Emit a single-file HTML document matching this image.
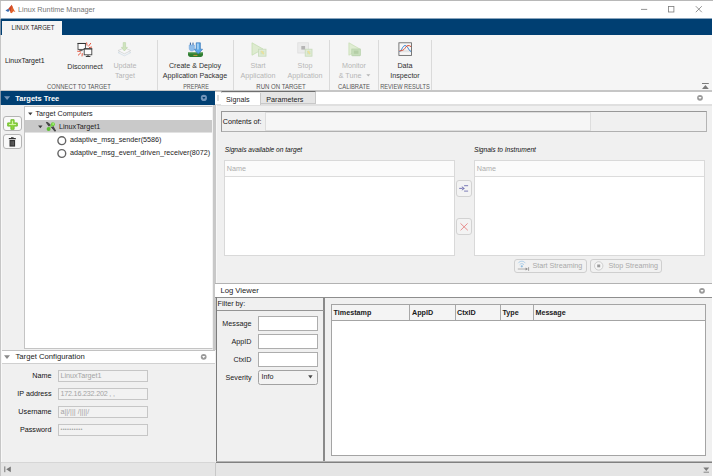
<!DOCTYPE html>
<html>
<head>
<meta charset="utf-8">
<title>Linux Runtime Manager</title>
<style>
html,body{margin:0;padding:0;}
body{width:713px;height:476px;overflow:hidden;background:#f0f0f0;font-family:"Liberation Sans",sans-serif;font-size:7.2px;color:#1c1c1c;position:relative;}
.a{position:absolute;white-space:nowrap;}
svg{position:absolute;overflow:visible;}
#titlebar{left:0;top:0;width:713px;height:19px;background:#fff;border-top:1px solid #b8b8b8;box-sizing:border-box;}
#title{left:18px;top:4.6px;font-size:7.8px;color:#767676;line-height:10px;transform:scaleX(0.93);transform-origin:0 0;}
#band{left:1px;top:19px;width:711px;height:16px;background:#003f72;}
#tab{left:2px;top:21px;width:60px;height:15px;background:#f5f5f5;}
#tabt{left:32.5px;top:22.5px;font-size:7px;color:#222;line-height:10px;transform:translateX(-50%) scaleX(0.85);}
#strip{left:1px;top:35px;width:711px;height:55px;background:#f5f5f5;}
#stripline{left:1px;top:90px;width:711px;height:2px;background:#c6c6c6;}
.tl{font-size:7.8px;line-height:9.5px;text-align:center;color:#303030;transform:translateX(-50%) scaleX(0.92);}
.dis{color:#b6b6b6;}
.sec{font-size:7px;color:#555;line-height:8px;text-align:center;transform:translateX(-50%) scaleX(0.83);top:83.3px;}
.vsep{width:1px;background:#dadada;top:40px;height:50px;}
#lhead{left:1px;top:91px;width:214px;height:13.5px;background:#003f72;}
#lheadt{left:15.2px;top:93.5px;font-weight:bold;color:#fff;font-size:7.5px;line-height:10px;}
#tree{left:24px;top:106px;width:189px;height:243px;background:#fff;border:1px solid #c4c4c4;border-right-color:#f2f2f2;box-sizing:border-box;}
.row{line-height:13.33px;height:13.33px;}
.btn{border:1px solid #b4b4b4;border-radius:3px;background:#f9f9f9;box-sizing:border-box;}
#chead{left:1px;top:350px;width:214px;height:14px;background:#fff;border-top:1px solid #c2c2c2;border-bottom:1px solid #d0d0d0;box-sizing:border-box;}
.h2{font-size:7.7px;line-height:10px;color:#222;}
.lbl{width:51.5px;left:0;text-align:right;line-height:12px;color:#111;}
.inp{left:57.5px;width:90.5px;height:12.2px;border:1px solid #c6c6c6;box-sizing:border-box;background:#f2f2f2;color:#a4a4a4;line-height:9.6px;padding-left:1.9px;}
#lbot{left:0;top:462px;width:713px;height:14px;background:#e5e5e5;}
.it{font-style:italic;font-size:6.6px;line-height:9px;color:#111;}
.tbl{background:#fff;border:1px solid #d9d9d9;box-sizing:border-box;}
.tblh{left:0;top:0;right:0;height:15px;background:#fbfbfb;border-bottom:1px solid #dcdcdc;color:#adadad;line-height:15px;padding-left:1.8px;}
.sbtn{border:1px solid #d2d2d2;border-radius:3px;background:#f3f3f3;box-sizing:border-box;}
.fin{left:258px;width:60px;height:14.5px;background:#fff;border:1px solid #adadad;box-sizing:border-box;}
.flbl{left:216px;width:35.5px;text-align:right;line-height:12px;color:#1a1a1a;}
.th{font-weight:bold;color:#1a1a1a;line-height:12px;top:306.5px;}
.cd{top:305px;width:1px;height:15px;background:#a8a8a8;}
</style>
</head>
<body>
<!-- window chrome -->
<div class="a" id="titlebar"></div>
<svg style="left:5px;top:3.8px" width="11" height="11" viewBox="0 0 12 12"><path d="M0.5 7.2 L3.6 5.2 L5.2 6.8 L3.4 8.6 Z" fill="#3d6fb0"/><path d="M3.6 5.2 L7.3 0.8 L8.4 4.2 L5.6 9.2 L5.2 6.8 Z" fill="#c8452a"/><path d="M7.3 0.8 C8.3 2.5 9.5 6.5 11.4 8.8 L9 8 L7.4 10.2 L5.6 9.2 C6.8 7 7.3 4 7.3 0.8Z" fill="#e2622a"/></svg>
<div class="a" id="title">Linux Runtime Manager</div>
<svg style="left:640px;top:5px" width="66" height="9" viewBox="0 0 66 9"><g stroke="#7a7a7a" stroke-width="0.8" fill="none"><path d="M1 4.4H7.2"/><rect x="28.4" y="1.5" width="5.5" height="5.5"/><path d="M55.8 1.2L61.8 7.2M61.8 1.2L55.8 7.2"/></g></svg>
<div class="a" id="band"></div>
<div class="a" id="tab"></div><div class="a" id="tabt">LINUX TARGET</div>
<div class="a" id="strip"></div>
<div class="a" id="stripline"></div>

<!-- toolstrip content -->
<div class="a" style="left:4.6px;top:55.5px;font-size:7.8px;line-height:10px;color:#222;transform:scaleX(0.885);transform-origin:0 0;">LinuxTarget1</div>
<div class="a tl" style="left:84.5px;top:62px;">Disconnect</div>
<div class="a tl dis" style="left:124.7px;top:61px;">Update<br>Target</div>
<div class="a sec" style="left:78.7px;transform:translateX(-50%) scaleX(0.845);">CONNECT TO TARGET</div>
<div class="a vsep" style="left:157px;"></div>
<div class="a tl" style="left:195.1px;top:61px;transform:translateX(-50%) scaleX(0.91);">Create &amp; Deploy<br>Application Package</div>
<div class="a sec" style="left:195.6px;transform:translateX(-50%) scaleX(0.777);">PREPARE</div>
<div class="a vsep" style="left:233px;"></div>
<div class="a tl dis" style="left:258.2px;top:61px;">Start<br>Application</div>
<div class="a tl dis" style="left:304.7px;top:61px;">Stop<br>Application</div>
<div class="a sec" style="left:281.4px;transform:translateX(-50%) scaleX(0.862);">RUN ON TARGET</div>
<div class="a vsep" style="left:329px;"></div>
<div class="a tl dis" style="left:353.8px;top:61px;">Monitor<br>&amp; Tune &nbsp;&nbsp;&nbsp;</div>
<svg style="left:366px;top:74px" width="5" height="3" viewBox="0 0 5 3"><path d="M0.3 0.3H4.3L2.3 2.6Z" fill="#b6b6b6"/></svg>
<div class="a sec" style="left:354.2px;transform:translateX(-50%) scaleX(0.829);">CALIBRATE</div>
<div class="a vsep" style="left:378px;"></div>
<div class="a tl" style="left:405.4px;top:61px;">Data<br>Inspector</div>
<div class="a sec" style="left:405px;transform:translateX(-50%) scaleX(0.81);">REVIEW RESULTS</div>
<div class="a vsep" style="left:431px;"></div>
<svg style="left:701px;top:82px" width="9" height="8" viewBox="0 0 9 8"><path d="M1 1.5H7.8" stroke="#7a7a7a" stroke-width="1"/><path d="M4.4 3L7.8 7H1Z" fill="#7a7a7a"/></svg>

<!-- ICONS placeholder -->
<!--ICONS-->
<!-- disconnect -->
<svg style="left:76px;top:42px" width="17" height="16" viewBox="0 0 17 16">
<rect x="2" y="1.4" width="7.4" height="6" fill="#fcfcfc" stroke="#444" stroke-width="0.9"/>
<path d="M1.6 1.5H9.8" stroke="#333" stroke-width="1"/>
<path d="M3.4 8.6H6.6" stroke="#444" stroke-width="0.9"/>
<rect x="8.2" y="6.8" width="7.6" height="6" fill="#fcfcfc" stroke="#444" stroke-width="0.9"/>
<path d="M7.8 6.9H16.2" stroke="#333" stroke-width="1"/>
<path d="M12 13V14M9.8 14.5H14.4" stroke="#3c3c3c" stroke-width="1"/>
<g stroke="#e2452a" stroke-width="0.9"><path d="M10.6 0.4L11.1 3.6M14.9 1L12.4 4.4M16 5L13 5.6"/><path d="M1.2 9.2L4.6 9.4M2 13.4L5 10.6M6 14.4L6.3 11.2"/></g>
</svg>
<!-- update target (disabled) -->
<svg style="left:117px;top:41.5px" width="15" height="15" viewBox="0 0 15 15" opacity="0.6">
<path d="M1 10.6L7.4 7.8L13.8 10.6L7.4 13.8Z" fill="#f2f7fb" stroke="#b4c8d8" stroke-width="0.7"/>
<path d="M1 8.6L7.4 5.8L13.8 8.6L7.4 11.8Z" fill="#fbfbfb" stroke="#b8b8b8" stroke-width="0.7"/>
<path d="M6.2 0.6H8.6V5.4H10.4L7.4 9L4.4 5.4H6.2Z" fill="#b7d99a" stroke="#94bf74" stroke-width="0.6"/>
</svg>
<!-- create & deploy -->
<svg style="left:187px;top:41.5px" width="17" height="16" viewBox="0 0 17 16">
<path d="M1 10.6H16V12.6C16 14.2 15 15 13.6 15H3.4C2 15 1 14.2 1 12.6Z" fill="#2f7d32"/>
<path d="M1 10.6H16V11.6H1Z" fill="#4d9a4a"/>
<path d="M6.4 13.4H10.4" stroke="#d89a3a" stroke-width="0.9"/>
<path d="M9.2 0.8H13.4V7.2H15.6L11.3 12L7 7.2H9.2Z" fill="#5aa7e6" stroke="#2f6fb6" stroke-width="0.6"/>
<path d="M10.3 1.4H11.6V7.6H10.3Z" fill="#bfe0fa"/>
<path d="M3.4 0.6V3M6 0.6V3" stroke="#2c5a9a" stroke-width="1"/>
<path d="M2.2 3H7.4V6.2C7.4 8 6.4 9 4.8 9C3.2 9 2.2 8 2.2 6.2Z" fill="#8fbdea" stroke="#6b9fd6" stroke-width="0.5"/>
</svg>
<!-- start app (disabled) -->
<svg style="left:250.5px;top:41.5px" width="16" height="15" viewBox="0 0 16 15" opacity="0.6">
<path d="M1 0.8L12 7L1 13.2Z" fill="#cfe6b8" stroke="#a6cf86" stroke-width="0.8" stroke-linejoin="round"/>
<rect x="7.4" y="7.2" width="7.6" height="7" fill="#d3e6c2" stroke="#a9c994" stroke-width="0.8"/>
<rect x="9.4" y="9" width="3.8" height="3.4" fill="#b7d7a3"/>
<path d="M10.4 9L12.8 12" stroke="#ecd25a" stroke-width="1.3"/>
</svg>
<svg style="left:297px;top:41.5px" width="16" height="15" viewBox="0 0 16 15" opacity="0.6">
<rect x="0.8" y="0.8" width="10.6" height="10.2" fill="#e6e6e6" stroke="#cfcfcf" stroke-width="0.8"/>
<rect x="4.3" y="4" width="3.8" height="3.6" fill="#8a8a8a"/>
<rect x="8.2" y="7.2" width="6.8" height="7" fill="#d3e6c2" stroke="#a9c994" stroke-width="0.8"/>
<rect x="10" y="9" width="3.4" height="3.4" fill="#b7d7a3"/>
<path d="M10.8 9L13 12" stroke="#ecd25a" stroke-width="1.3"/>
</svg>
<!-- monitor & tune (disabled) -->
<svg style="left:347.5px;top:41.5px" width="14" height="15" viewBox="0 0 14 15" opacity="0.6">
<path d="M0.9 0.8L11.8 7L0.9 13.2Z" fill="#d2e8bd" stroke="#aed28f" stroke-width="0.8" stroke-linejoin="round"/>
<rect x="3.8" y="7" width="8.6" height="6.6" fill="#a9cf95" stroke="#8fba7a" stroke-width="0.7"/>
<rect x="5.8" y="8.6" width="4.6" height="3.2" fill="#8ab573"/>
<path d="M5 14.4V13.6M7 14.4V13.6M9 14.4V13.6M11 14.4V13.6" stroke="#8fba7a" stroke-width="0.8"/>
</svg>
<!-- data inspector -->
<svg style="left:398px;top:42px" width="15" height="15" viewBox="0 0 15 15">
<rect x="0.9" y="0.8" width="12.6" height="12.6" fill="#f7f7f7" stroke="#626262" stroke-width="0.85"/>
<path d="M1.4 9H13" stroke="#e4e4e4" stroke-width="2.6"/>
<path d="M1.4 9.6C3.6 9.6 4.4 3.6 7 3.6C9.6 3.6 10.6 8.4 13 9.6" fill="none" stroke="#2f7fd0" stroke-width="1"/>
<path d="M1.4 8.8C3.4 8.8 5.6 8.6 7.6 5.4C9 3.2 11 3 13 4.6" fill="none" stroke="#d8452a" stroke-width="1"/>
</svg>
<!--/ICONS-->

<!-- left panel -->
<div class="a" id="lhead"></div>
<div class="a" id="lheadt">Targets Tree</div>
<svg style="left:3.5px;top:95.8px" width="7" height="5" viewBox="0 0 7 5"><path d="M0 0.3H6.2L3.1 3.9Z" fill="#7495b8"/></svg>
<svg style="left:200px;top:94px" width="8" height="8" viewBox="0 0 8 8"><circle cx="3.9" cy="3.9" r="3.1" fill="#7194ba"/><path d="M2.3 3H5.5L3.9 5.2Z" fill="#003f72"/></svg>
<div class="a" id="tree"></div>
<div class="a" style="left:25px;top:120px;width:187px;height:12px;background:#c9c9c9;"></div><div class="a" style="left:25px;top:132px;width:187px;height:1px;background:#e2e2e2;"></div>
<svg style="left:28px;top:111.6px" width="5" height="4" viewBox="0 0 5 4"><path d="M0.1 0.4H4.5L2.3 3.2Z" fill="#3c3c3c"/></svg>
<div class="a row" style="left:35.5px;top:106.7px;">Target Computers</div>
<svg style="left:38.4px;top:125px" width="5" height="4" viewBox="0 0 5 4"><path d="M0.1 0.4H4.5L2.3 3.2Z" fill="#3c3c3c"/></svg>
<div class="a row" style="left:59px;top:120px;">LinuxTarget1</div>
<div class="a row" style="left:70px;top:133.4px;">adaptive_msg_sender(5586)</div>
<div class="a row" style="left:70px;top:146.4px;">adaptive_msg_event_driven_receiver(8072)</div>
<svg style="left:57px;top:135.5px" width="10" height="23" viewBox="0 0 10 23"><circle cx="4.8" cy="4.7" r="3.9" fill="#fff" stroke="#646464" stroke-width="1.4"/><circle cx="4.8" cy="17.5" r="3.9" fill="#fff" stroke="#646464" stroke-width="1.4"/></svg>
<svg style="left:45px;top:121px" width="12" height="12" viewBox="0 0 12 12"><path d="M1.2 1.2L10.6 10.2" stroke="#505050" stroke-width="1.1"/><path d="M1 1.6L2.6 1L5.6 3.6L3.6 5.4Z" fill="#484848"/><path d="M6.4 6.2L8.4 5L11 9.8L9.6 10.6Z" fill="#484848"/><path d="M3.6 7.9L7.9 3.3" stroke="#8ee060" stroke-width="1.3"/><circle cx="7.9" cy="3.3" r="2" fill="#6ed03c"/><circle cx="8.2" cy="3" r="0.9" fill="#a6f07c"/><circle cx="3.6" cy="7.9" r="2" fill="#5cc030"/></svg>
<div class="a btn" style="left:2.5px;top:116.3px;width:19.5px;height:14.4px;"></div>
<div class="a btn" style="left:2.5px;top:134.3px;width:19.5px;height:14.4px;"></div>
<svg style="left:7px;top:118.5px" width="11" height="11" viewBox="0 0 11 11"><path d="M3.9 0.7H7.1V3.9H10.3V7.1H7.1V10.3H3.9V7.1H0.7V3.9H3.9Z" fill="#8fd640" stroke="#6dbb2c" stroke-width="0.9" stroke-linejoin="round"/><path d="M5.5 1.8V5.5M2 5.5H9" stroke="#d4f3a8" stroke-width="1.2"/></svg>
<svg style="left:8px;top:137px" width="9" height="10" viewBox="0 0 9 10"><path d="M0.8 1.6H7.8M3 0.7H5.6" stroke="#333" stroke-width="1.1"/><path d="M1.5 3H7.1V9.6H1.5Z" fill="#333"/><path d="M3.1 4.2V8.4M4.3 4.2V8.4M5.5 4.2V8.4" stroke="#888" stroke-width="0.5"/></svg>

<div class="a" id="chead"></div>
<svg style="left:4px;top:354.6px" width="7" height="5" viewBox="0 0 7 5"><path d="M0 0.2H6L3 3.9Z" fill="#8a8a8a"/></svg>
<div class="a h2" style="left:15.5px;top:351.8px;">Target Configuration</div>
<svg style="left:200px;top:352.5px" width="8" height="8" viewBox="0 0 8 8"><circle cx="3.7" cy="3.8" r="2.9" fill="#9a9a9a"/><path d="M2.1 2.9H5.3L3.7 5.3Z" fill="#fff"/></svg>
<div class="a lbl" style="top:369.6px;">Name</div>
<div class="a inp" style="top:369.5px;">LinuxTarget1</div>
<div class="a lbl" style="top:387.6px;">IP address</div>
<div class="a inp" style="top:387.6px;letter-spacing:-0.2px;">172.16.232.202 , ,</div>
<div class="a lbl" style="top:405.6px;">Username</div>
<div class="a inp" style="top:405.6px;">a||/||| /||||/</div>
<div class="a lbl" style="top:423.6px;">Password</div>
<div class="a inp" style="top:423.6px;font-size:5.4px;letter-spacing:0.35px;">••••••••••</div>

<div class="a" id="lbot"></div>
<div class="a" style="left:0;top:462px;width:215px;height:1px;background:#d6d6d6;"></div>
<svg style="left:3.5px;top:466px" width="8" height="7" viewBox="0 0 8 7"><path d="M0.8 0.4V6.2" stroke="#777" stroke-width="1"/><path d="M6.8 0.4V6.2L2.2 3.3Z" fill="#777"/></svg>

<!--RIGHT-->
<!-- right top: tab bar -->
<div class="a" style="left:215px;top:92px;width:497px;height:12.5px;background:#fff;"></div>
<div class="a" style="left:215px;top:104.3px;width:497px;height:1.3px;background:#e0e0e0;"></div>
<div class="a" style="left:213px;top:105px;width:3px;height:245px;background:#c8c8c8;"></div><div class="a" style="left:216px;top:105px;width:1px;height:178px;background:#f7f7f7;"></div>
<div class="a" style="left:217.4px;top:95px;width:1.5px;height:5.5px;background:#dadada;"></div>
<div class="a" style="left:220.5px;top:91.3px;width:95px;height:13.2px;background:#e5e5e5;border:1px solid #c8c8c8;border-top:1.2px solid #6e6e6e;box-sizing:border-box;"></div>
<div class="a" style="left:220.5px;top:92.5px;width:40.7px;height:12.2px;background:#fff;border-right:1px solid #c8c8c8;box-sizing:border-box;"></div>
<div class="a" style="left:226px;top:93.5px;line-height:11px;color:#222;">Signals</div>
<div class="a" style="left:266.3px;top:93.5px;line-height:11px;color:#222;">Parameters</div>
<svg style="left:696px;top:94px" width="8" height="8" viewBox="0 0 8 8"><circle cx="4" cy="3.8" r="2.9" fill="#9a9a9a"/><path d="M2.4 2.9H5.6L4 5.3Z" fill="#fff"/></svg>

<!-- contents of -->
<div class="a" style="left:221.3px;top:111px;width:485.7px;height:21px;border:1px solid #989898;border-right-color:#b4b4b4;border-bottom-color:#b0b0b0;box-sizing:border-box;background:#f0f0f0;"></div>
<div class="a" style="left:265px;top:112px;width:326px;height:19px;background:#f6f6f6;border:1px solid #dddddd;box-sizing:border-box;"></div>
<div class="a" style="left:222.8px;top:115.5px;line-height:12px;color:#111;">Contents of:</div>

<div class="a it" style="left:224.8px;top:145.3px;">Signals available on target</div>
<div class="a it" style="left:474px;top:145.3px;">Signals to Instrument</div>
<div class="a tbl" style="left:224px;top:160px;width:231px;height:96px;"><div class="a tblh">Name</div></div>
<div class="a tbl" style="left:474px;top:160px;width:230.5px;height:96px;"><div class="a tblh">Name</div></div>
<div class="a sbtn" style="left:456.4px;top:179.8px;width:16px;height:17.4px;"></div>
<div class="a sbtn" style="left:456.4px;top:217.5px;width:16px;height:17.6px;"></div>
<svg style="left:459px;top:184px" width="10" height="9" viewBox="0 0 10 9"><path d="M0.2 4.4H3.2" stroke="#8080ba" stroke-width="1.1"/><path d="M2.6 2L5.9 4.4L2.6 6.8L3.6 4.4Z" fill="#7676b4"/><path d="M5.1 1.7H9.1M5.1 7.1H9.1" stroke="#7c7cb8" stroke-width="1"/></svg>
<svg style="left:460px;top:222.5px" width="9" height="8" viewBox="0 0 9 8"><path d="M0.5 0.4L7.8 7.3M7.6 0.4L0.6 7.3" stroke="#e88e8e" stroke-width="1"/></svg>

<div class="a sbtn" style="left:514.4px;top:258.5px;width:72.2px;height:14px;border-color:#cfcfcf;background:#f1f1f1;"></div>
<div class="a sbtn" style="left:590.3px;top:258.5px;width:72.2px;height:14px;border-color:#cfcfcf;background:#f1f1f1;"></div>
<div class="a" style="left:532.4px;top:260px;line-height:11px;color:#a9a9a9;">Start Streaming</div>
<div class="a" style="left:608.5px;top:260px;line-height:11px;color:#a9a9a9;">Stop Streaming</div>
<svg style="left:517px;top:260px" width="13" height="11" viewBox="0 0 13 11"><g fill="none" stroke="#a6cbe8" stroke-width="0.9"><path d="M1.2 3.2C3 0.6 6.6 0.6 8.4 3.2"/><path d="M2.6 4.8C3.8 3.2 5.8 3.2 7 4.8"/></g><circle cx="4.8" cy="6.3" r="1.1" fill="#8fbde0"/><path d="M0.8 9H9.5" stroke="#a0a0a0" stroke-width="0.8"/><path d="M8.6 7.4V10.6L11 9Z" fill="#8a8a8a"/><path d="M11.6 7.2V10.8" stroke="#8a8a8a" stroke-width="0.8"/></svg>
<svg style="left:594px;top:260.5px" width="10" height="10" viewBox="0 0 10 10"><circle cx="4.7" cy="4.9" r="4.2" fill="#f6f6f6" stroke="#c4c4c4" stroke-width="0.8"/><rect x="3.2" y="3.5" width="3" height="2.8" fill="#9c9c9c"/></svg>

<!-- log viewer -->
<div class="a" style="left:215px;top:283px;width:497px;height:1.2px;background:#b2b2b2;"></div>
<div class="a" style="left:215px;top:284.2px;width:497px;height:12.8px;background:#fff;"></div>
<div class="a h2" style="left:220.4px;top:285.6px;">Log Viewer</div>
<svg style="left:697.5px;top:286.5px" width="8" height="8" viewBox="0 0 8 8"><circle cx="4" cy="3.8" r="2.9" fill="#9a9a9a"/><path d="M2.4 2.9H5.6L4 5.3Z" fill="#fff"/></svg>
<div class="a" style="left:215px;top:296.8px;width:497px;height:1.2px;background:#8e8e8e;"></div>
<div class="a" style="left:216px;top:297px;width:1px;height:165px;background:#7c7c7c;"></div>
<div class="a" style="left:323.2px;top:298px;width:1.8px;height:164px;background:#8a8a8a;"></div>
<div class="a" style="left:216.5px;top:309.6px;width:107px;height:1.1px;background:#959595;"></div>
<div class="a" style="left:217.6px;top:297.7px;line-height:11px;color:#1a1a1a;">Filter by:</div>
<div class="a flbl" style="top:317.5px;">Message</div>
<div class="a fin" style="top:316.2px;"></div>
<div class="a flbl" style="top:335.5px;">AppID</div>
<div class="a fin" style="top:334.2px;"></div>
<div class="a flbl" style="top:353.5px;">CtxID</div>
<div class="a fin" style="top:352.4px;"></div>
<div class="a flbl" style="top:372px;">Severity</div>
<div class="a fin" style="top:370.3px;border-radius:2.5px;background:#f3f3f3;border-color:#a2a2a2;line-height:12.5px;padding-left:2.5px;color:#1a1a1a;">Info</div>
<svg style="left:308px;top:375.3px" width="5" height="4" viewBox="0 0 5 4"><path d="M0.2 0.3H4.6L2.4 3.4Z" fill="#4a4a4a"/></svg>

<div class="a" style="left:331px;top:304.3px;width:375px;height:151.4px;background:#fff;border:1px solid #a4a4a4;box-sizing:border-box;"></div>
<div class="a" style="left:332px;top:305px;width:373px;height:15.5px;background:#f4f4f4;border-bottom:1px solid #a4a4a4;box-sizing:border-box;"></div>
<div class="a th" style="left:333.5px;">Timestamp</div>
<div class="a cd" style="left:409.3px;"></div>
<div class="a th" style="left:412px;">AppID</div>
<div class="a cd" style="left:454.5px;"></div>
<div class="a th" style="left:457px;">CtxID</div>
<div class="a cd" style="left:499.7px;"></div>
<div class="a th" style="left:502.4px;">Type</div>
<div class="a cd" style="left:533px;"></div>
<div class="a th" style="left:535.4px;">Message</div>

<div class="a" style="left:216px;top:461px;width:496px;height:1px;background:#b4b4b4;"></div><div class="a" style="left:216px;top:462px;width:496px;height:1px;background:#808080;"></div>
<div class="a" style="left:215px;top:462.7px;width:1.3px;height:14px;background:#c8c8c8;"></div>
<svg style="left:703px;top:467px" width="7" height="6" viewBox="0 0 7 6"><path d="M0.3 0.5H6.2L3.3 3.9Z" fill="#7c7c7c"/><path d="M0.6 5.2H6" stroke="#7c7c7c" stroke-width="0.9"/></svg>
<div class="a" style="left:712px;top:1px;width:1px;height:475px;background:#fff;"></div>
<div class="a" style="left:0;top:1px;width:1px;height:475px;background:#c6c6c6;"></div>
<div class="a" style="left:0;top:19px;width:1px;height:16px;background:#7f93a8;"></div>
<div class="a" style="left:0;top:91px;width:1px;height:14px;background:#7f93a8;"></div>
<div class="a" style="left:1px;top:105px;width:1px;height:357px;background:#f8f8f8;"></div>
<div class="a" style="left:1px;top:18px;width:711px;height:1px;background:#8aa5bd;"></div>
<!--/RIGHT-->
</body>
</html>
